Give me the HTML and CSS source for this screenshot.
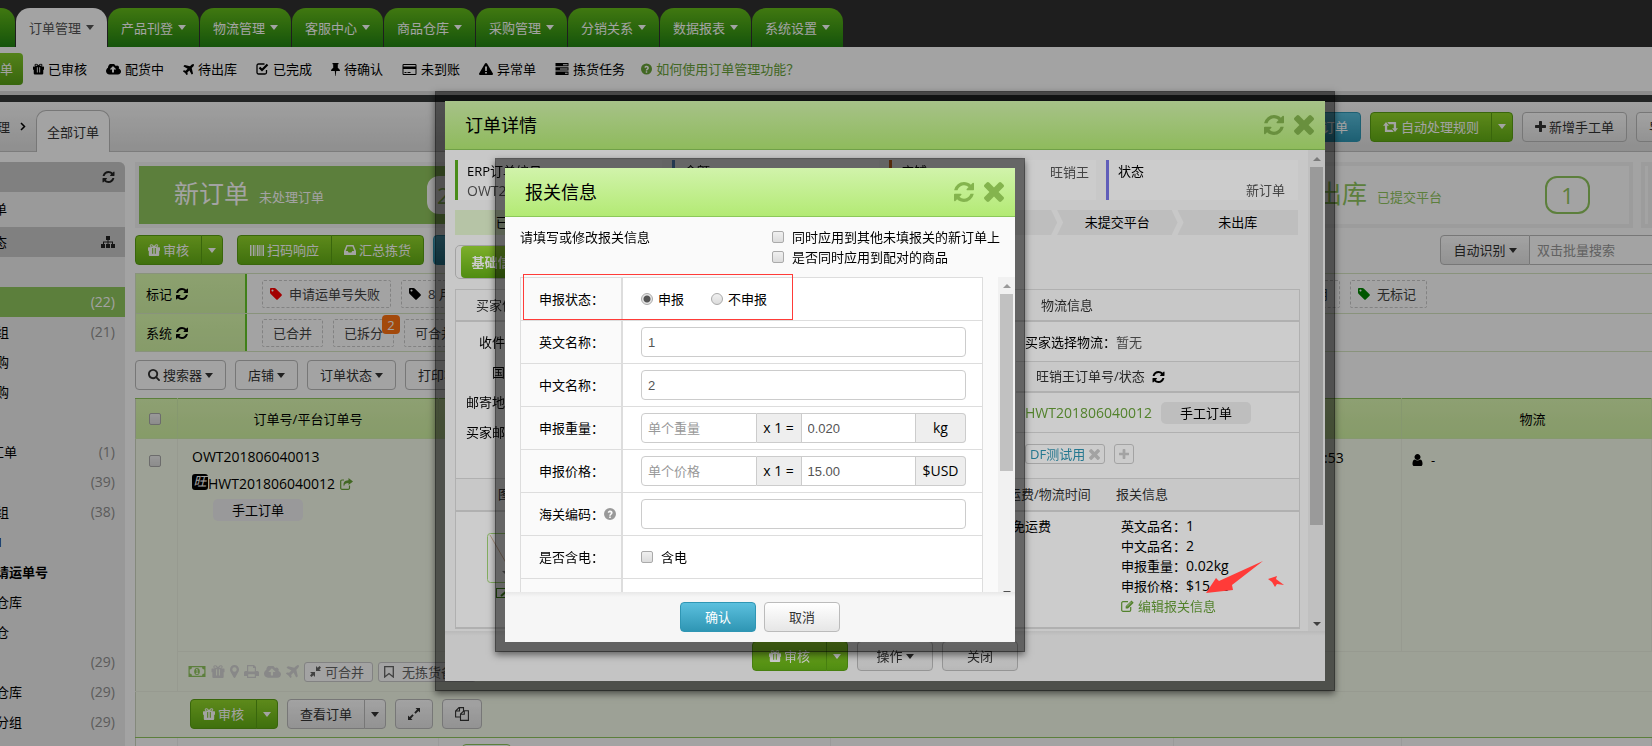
FILE: index.html
```html
<!DOCTYPE html>
<html lang="zh-CN">
<head>
<meta charset="utf-8">
<title>订单管理</title>
<link rel="stylesheet" href="styles.css">
</head>
<body>
<svg class="defs" aria-hidden="true">
  <symbol id="refresh" viewBox="128 128 1536 1536"><path d="M1639 1056q0 5-1 7-64 268-268 434.500t-478 166.500q-146 0-282.500-55t-243.500-157l-129 129q-19 19-45 19t-45-19-19-45v-448q0-26 19-45t45-19h448q26 0 45 19t19 45-19 45l-137 137q71 66 161 102t187 36q134 0 250-65t186-179q11-17 53-117 8-23 30-23h192q13 0 22.500 9.500t9.500 22.500zm25-800v448q0 26-19 45t-45 19h-448q-26 0-45-19t-19-45 19-45l138-138q-148-137-349-137-134 0-250 65t-186 179q-11 17-53 117-8 23-30 23h-199q-13 0-22.500-9.500t-9.500-22.500v-7q65-268 270-434.500t480-166.500q146 0 284 55.500t245 156.500l130-129q19-19 45-19t45 19 19 45z"/></symbol>
  <symbol id="times" viewBox="302 366 1188 1188"><path d="M1490 1322q0 40-28 68l-136 136q-28 28-68 28t-68-28l-294-294-294 294q-28 28-68 28t-68-28l-136-136q-28-28-28-68t28-68l294-294-294-294q-28-28-28-68t28-68l136-136q28-28 68-28t68 28l294 294 294-294q28-28 68-28t68 28l136 136q28 28 28 68t-28 68l-294 294 294 294q28 28 28 68z"/></symbol>
  <symbol id="plus" viewBox="192 128 1408 1408"><path d="M1600 736v192q0 40-28 68t-68 28h-416v416q0 40-28 68t-68 28h-192q-40 0-68-28t-28-68v-416h-416q-40 0-68-28t-28-68v-192q0-40 28-68t68-28h416v-416q0-40 28-68t68-28h192q40 0 68 28t28 68v416h416q40 0 68 28t28 68z"/></symbol>
  <symbol id="search" viewBox="64 128 1664 1664"><path d="M1216 832q0-185-131.500-316.500t-316.500-131.500-316.500 131.500-131.500 316.500 131.500 316.500 316.500 131.500 316.500-131.500 131.500-316.500zm512 832q0 52-38 90t-90 38q-54 0-90-38l-343-342q-179 124-399 124-143 0-273.500-55.500t-225-150-150-225-55.500-273.500 55.500-273.500 150-225 225-150 273.500-55.500 273.500 55.500 225 150 150 225 55.500 273.500q0 220-124 399l343 343q37 37 37 90z"/></symbol>
  <symbol id="tag" viewBox="128 128 1536 1536"><path d="M576 448q0-53-37.500-90.500t-90.500-37.500-90.500 37.500-37.500 90.500 37.500 90.500 90.500 37.500 90.500-37.500 37.500-90.500zm1067 576q0 53-37 90l-491 492q-39 37-91 37-53 0-90-37l-715-716q-38-37-64.500-101t-26.500-117v-416q0-52 38-90t90-38h416q53 0 117 26.500t102 64.500l715 714q37 39 37 91z"/></symbol>
  <symbol id="plane" viewBox="190 128 1410 1410"><path d="M1568 160q44 52 12 148t-108 172l-161 161 160 696q5 19-12 33l-128 96q-7 6-19 6-4 0-7-1-15-3-21-16l-279-508-259 259 53 194q5 17-8 31l-96 96q-9 9-23 9h-2q-15-2-24-13l-189-252-252-189q-11-7-13-23-1-13 9-25l96-97q9-9 23-9 6 0 8 1l194 53 259-259-508-279q-14-8-17-24-2-16 9-27l128-128q14-13 30-8l665 159 160-160q76-76 172-108t148 12z"/></symbol>
  <symbol id="cloud" viewBox="0 256 1920 1280"><path d="M1280 864q0-14-9-23l-352-352q-9-9-23-9t-23 9l-351 351q-10 12-10 24 0 14 9 23t23 9h224v352q0 13 9.500 22.500t22.500 9.500h192q13 0 22.500-9.500t9.500-22.500v-352h224q13 0 22.500-9.500t9.500-22.500zm640 288q0 159-112.500 271.500t-271.500 112.500h-1088q-185 0-316.500-131.500t-131.500-316.500q0-130 70-240t188-165q-2-30-2-43 0-212 150-362t362-150q156 0 285.500 87t188.500 231q71-62 166-62 106 0 181 75t75 181q0 76-41 138 130 31 213.500 135.500t83.500 238.500z"/></symbol>
  <symbol id="user" viewBox="256 128 1280 1536"><path d="M1536 1399q0 109-62.500 187t-150.500 78h-854q-88 0-150.500-78t-62.500-187q0-85 8.500-160.500t31.500-152 58.500-131 94-89 134.500-34.500q131 128 313 128t313-128q76 0 134.500 34.500t94 89 58.500 131 31.500 152 8.500 160.500zm-256-887q0 159-112.500 271.500t-271.500 112.500-271.500-112.500-112.500-271.500 112.500-271.500 271.500-112.500 271.500 112.500 112.500 271.500z"/></symbol>
  <symbol id="gift" viewBox="0 0 12 12"><path fill-rule="evenodd" d="M.5 3.200H3.200C1.500 3.200 1 .4 3.200.2 4.600.1 5.300 1 6 2 6.700 1 7.400.1 8.800.2 11 .4 10.500 3.200 8.800 3.200h2.700a.5.500 0 0 1 .5.500v3h-.8v4.300a.9.900 0 0 1-.9.900H1.700a.9.900 0 0 1-.9-.9V6.700H0v-3a.5.500 0 0 1 .5-.5zM3.300 1.200c-1 .1-.9 1.300 0 1.300h1.600c-.5-.8-1-1.300-1.600-1.300zm5.400 0c-.6 0-1.100.5-1.600 1.300h1.600c.9 0 1-1.200 0-1.300zM4.200 4v5.800h1V4zm2.600 0v5.800h1V4z"/></symbol>
  <symbol id="check" viewBox="0 0 13 12"><path d="M10.500 7v2.500a1.500 1.500 0 0 1-1.500 1.500H2.500A1.500 1.500 0 0 1 1 9.500v-7A1.500 1.500 0 0 1 2.500 1h6" fill="none" stroke="currentColor" stroke-width="1.300"/><path d="M3.500 4.500 6 7l5.500-5.500" fill="none" stroke="currentColor" stroke-width="2.200"/></symbol>
  <symbol id="pin" viewBox="0 0 9 13"><path d="M1.500 0h6v1.200H6.800V5C8 5.600 9 6.500 9 8H5.200L4.700 13h-.4L3.800 8H0c0-1.500 1-2.400 2.200-3V1.200h-.7z"/></symbol>
  <symbol id="card" viewBox="0 0 14 11"><path fill-rule="evenodd" d="M1.200 0h11.600A1.200 1.200 0 0 1 14 1.200v8.600a1.200 1.200 0 0 1-1.200 1.200H1.200A1.200 1.200 0 0 1 0 9.800V1.200A1.200 1.200 0 0 1 1.200 0zM1 1v1.500h12V1zm0 4v5h12V5zm1 3h2v1H2zm3 0h3v1H5z"/></symbol>
  <symbol id="warn" viewBox="0 0 14 12"><path fill-rule="evenodd" d="M7 0c.4 0 .8.200 1 .6l5.900 9.800c.4.800 0 1.600-1 1.600H1.100c-1 0-1.400-.8-1-1.600L6 .6C6.200.2 6.600 0 7 0zM6 3.500 6.200 8h1.600L8 3.500zM6.100 9v1.500h1.800V9z"/></symbol>
  <symbol id="tasks" viewBox="0 0 14 12"><path fill-rule="evenodd" d="M.5 0h13v3.300H.5zM.5 4.300h13v3.300H.5zM.5 8.600h13v3.300H.5zM8 1.200v1h4.600v-1zM5 5.500v1h7.600v-1zM10 9.700v1h2.600v-1z"/></symbol>
  <symbol id="help" viewBox="0 0 12 12"><path fill-rule="evenodd" d="M6 0a6 6 0 1 1 0 12A6 6 0 0 1 6 0zM3.600 4.200l1.300.7c.4-1 2-.9 2 .1 0 .9-1.700.9-1.700 2.700h1.600c0-1.200 1.800-1.200 1.800-2.900 0-2.500-3.700-3.200-5-.6zM5.200 8.400V10h1.600V8.400z"/></symbol>
  <symbol id="sitemap" viewBox="0 0 14 12"><path d="M5 0h4v4H7.500v1.500H12V8h2v4h-4V8h1V6.500H7.500V8H9v4H5V8h1.500V6.500H3V8h1v4H0V8h2V5.500h4.500V4H5z"/></symbol>
  <symbol id="barcode" viewBox="0 0 14 11"><path d="M0 0h1v11H0zM1.500 0h.7v11h-.7zM3 0h1.500v11H3zM5.500 0h.7v11h-.7zM7 0h1.500v11H7zM9.200 0h.7v11h-.7zM10.500 0h1v11h-1zM12.500 0H14v11h-1.500z"/></symbol>
  <symbol id="inbox" viewBox="0 0 12 10"><path fill-rule="evenodd" d="M2.500 0h7l2.500 6v3.500a.5.500 0 0 1-.5.500H.5a.5.500 0 0 1-.5-.5V6zm1 1.500L1.800 6h2l.8 1.600h2.800L8.200 6h2L8.500 1.500z"/></symbol>
  <symbol id="retweet" viewBox="0 0 15 10"><path d="M3 0l3 3.700H4.200V7.700H9L10.800 10H2.500a.6.600 0 0 1-.6-.6V3.700H0zM12 10 9 6.300h1.800V2.300H6L4.200 0h8.300a.6.600 0 0 1 .6.600v5.700H15z"/></symbol>
  <symbol id="share" viewBox="0 0 13 12"><path d="M9.500 7.500V10a1.300 1.300 0 0 1-1.300 1.300H2A1.300 1.300 0 0 1 .7 10V3.300A1.300 1.300 0 0 1 2 2h2" fill="none" stroke="currentColor" stroke-width="1.200"/><path d="M8.500 0 13 3.500 8.500 7V5C6 5 4.500 5.500 4 8.500 2.600 5 4.500 2.200 8.500 2.200z"/></symbol>
  <symbol id="edit" viewBox="0 0 13 12"><path d="M9.700 7v3a1.300 1.300 0 0 1-1.300 1.300H2A1.300 1.300 0 0 1 .7 10V3A1.300 1.300 0 0 1 2 1.700h5" fill="none" stroke="currentColor" stroke-width="1.200"/><path d="M10.500.5 12.700 2.700 7 8.500H4.700V6.200z"/><path d="M6 6.500 10.300 2.200" stroke="#fff" stroke-width=".6"/></symbol>
  <symbol id="money" viewBox="0 0 17 11"><path fill-rule="evenodd" d="M0 0h17v11H0zM3.500 1.200a2.300 2.300 0 0 1-2.300 2.300v4a2.300 2.300 0 0 1 2.300 2.300h10a2.300 2.300 0 0 1 2.300-2.300v-4a2.300 2.300 0 0 1-2.300-2.300z"/><ellipse cx="8.500" cy="5.500" rx="2.800" ry="3.500"/><path d="M7.500 4 8.600 3.200V7.500M7.300 7.500h2.500" stroke="#f7fdeb" fill="none" stroke-width=".9"/></symbol>
  <symbol id="marker" viewBox="0 0 9 13"><path fill-rule="evenodd" d="M4.500 0A4.500 4.500 0 0 1 9 4.500C9 6 8.500 6.700 5.300 12.500a.9.900 0 0 1-1.600 0C.5 6.700 0 6 0 4.500A4.500 4.500 0 0 1 4.500 0zm0 2.300a2.200 2.200 0 1 0 0 4.400 2.200 2.200 0 0 0 0-4.400z"/></symbol>
  <symbol id="print" viewBox="0 0 15 13"><path fill-rule="evenodd" d="M3 0h7l2 2v4h1.500A1.500 1.500 0 0 1 15 7.500V11h-3v2H3v-2H0V7.500A1.500 1.500 0 0 1 1.500 6H3zm1.200 1.200V6.500h6.600V3H9V1.200zm0 8v2.600h6.600V9.200z"/></symbol>
  <symbol id="compress" viewBox="0 0 11 11"><path d="M6 0v5h5L9.300 3.500 11 1.500 9.500 0 7.700 1.700zM5 11V6H0l1.700 1.500L0 9.500 1.500 11l1.800-1.700z"/></symbol>
  <symbol id="expand" viewBox="0 0 12 12"><path d="M7.500 0H12v4.500L10.400 3 7.600 5.700l-1.300-1.300L9 1.600zM4.500 12H0V7.500L1.600 9l2.800-2.700 1.300 1.300L3 10.400z"/></symbol>
  <symbol id="bookmark" viewBox="0 0 10 12"><path d="M.7.700h8.600v10.300L5 7.500.7 11z" fill="none" stroke="currentColor" stroke-width="1.300"/></symbol>
  <symbol id="copy" viewBox="0 0 14 14"><path d="M5.500 10H.6V4L4 .6h4.500V4M4.500.6V4H.8M5.500 13.400V7L9 3.700h4.400v9.700zM9.300 4v3.300H5.800" fill="none" stroke="currentColor" stroke-width="1.100"/></symbol>
</svg>

<div class="page">
  <header class="topbar">
    <nav class="tabs">
      <a class="tab tab-cut" href="#"></a>
      <a class="tab active" href="#">订单管理<i class="caret"></i></a>
      <a class="tab" href="#">产品刊登<i class="caret"></i></a>
      <a class="tab" href="#">物流管理<i class="caret"></i></a>
      <a class="tab" href="#">客服中心<i class="caret"></i></a>
      <a class="tab" href="#">商品仓库<i class="caret"></i></a>
      <a class="tab" href="#">采购管理<i class="caret"></i></a>
      <a class="tab" href="#">分销关系<i class="caret"></i></a>
      <a class="tab" href="#">数据报表<i class="caret"></i></a>
      <a class="tab" href="#">系统设置<i class="caret"></i></a>
    </nav>
  </header>
  <nav class="subnav">
    <a class="current" href="#">单</a>
    <a href="#"><svg width="11" height="12"><use href="#gift"/></svg>已审核</a>
    <a href="#"><svg width="15" height="11"><use href="#cloud"/></svg>配货中</a>
    <a href="#"><svg width="11" height="11"><use href="#plane"/></svg>待出库</a>
    <a href="#"><svg width="13" height="12"><use href="#check"/></svg>已完成</a>
    <a href="#"><svg width="9" height="13"><use href="#pin"/></svg>待确认</a>
    <a href="#"><svg width="15" height="11"><use href="#card"/></svg>未到账</a>
    <a href="#"><svg width="14" height="12"><use href="#warn"/></svg>异常单</a>
    <a href="#"><svg width="14" height="12"><use href="#tasks"/></svg>拣货任务</a>
    <a class="howto" href="#"><svg width="11" height="12"><use href="#help"/></svg>如何使用订单管理功能？</a>
  </nav>
  <div class="crumbs">
    <span class="crumb">理</span>
    <svg class="chev" width="6" height="9" viewBox="0 0 6 9"><path d="M1 1l3.500 3.500L1 8" fill="none" stroke="currentColor" stroke-width="1.500"/></svg>
    <a class="page-tab" href="#">全部订单</a>
    <div class="crumb-actions">
      <button class="btn teal">同步订单</button>
      <div class="split">
        <button class="btn green"><svg width="15" height="10"><use href="#retweet"/></svg>自动处理规则</button><button class="btn green more" aria-label="更多"><i class="caret"></i></button>
      </div>
      <button class="btn"><svg width="11" height="11"><use href="#plus"/></svg>新增手工单</button>
      <button class="btn">导出</button>
    </div>
  </div>

  <div class="columns">
    <aside class="side">
      <div class="side-head"><svg width="13" height="12"><use href="#refresh"/></svg></div>
      <a class="side-top" href="#"><span>单</span></a>
      <div class="side-head"><span>态</span><svg width="14" height="12"><use href="#sitemap"/></svg></div>
      <ul>
        <li></li>
        <li class="on"><span></span><b>(22)</b></li>
        <li><span>组</span><b>(21)</b></li>
        <li><span>购</span></li>
        <li><span>购</span></li>
        <li></li>
        <li><span class="far">汇单</span><b>(1)</b></li>
        <li><span></span><b>(39)</b></li>
        <li><span>组</span><b>(38)</b></li>
        <li><span>1</span></li>
        <li><span class="strong">请运单号</span></li>
        <li><span>仓库</span></li>
        <li><span>仓</span></li>
        <li><span></span><b>(29)</b></li>
        <li><span>仓库</span><b>(29)</b></li>
        <li><span>分组</span><b>(29)</b></li>
      </ul>
    </aside>

    <main class="main">
      <section class="cards">
        <div class="card solid"><h2>新订单</h2><span>未处理订单</span><strong>22</strong></div>
        <div class="card"></div>
        <div class="card"></div>
        <div class="card"><h2>待出库</h2><span>已提交平台</span><strong>1</strong></div>
        <div class="card"></div>
      </section>

      <section class="tools">
        <div class="split">
          <button class="btn green"><svg width="12" height="12"><use href="#gift"/></svg>审核</button><button class="btn green more" aria-label="更多"><i class="caret"></i></button>
        </div>
        <div class="split">
          <button class="btn green"><svg width="14" height="11"><use href="#barcode"/></svg>扫码响应</button><button class="btn green"><svg width="12" height="10"><use href="#inbox"/></svg>汇总拣货</button>
        </div>
        <button class="btn teal">标记</button>
        <div class="split finder">
          <button class="btn">自动识别<i class="caret"></i></button><input type="text" placeholder="双击批量搜索" aria-label="搜索">
        </div>
      </section>

      <section class="filters">
        <div class="filter">
          <div class="filter-name">标记<svg width="12" height="12"><use href="#refresh"/></svg></div>
          <div class="chips">
            <span class="chip"><svg class="red" width="12" height="12"><use href="#tag"/></svg>申请运单号失败</span>
            <span class="chip"><svg class="black" width="12" height="12"><use href="#tag"/></svg>8 月</span>
            <span class="chip push"><svg class="black" width="12" height="12"><use href="#tag"/></svg>6 月</span>
            <span class="chip"><svg class="dark-green" width="12" height="12"><use href="#tag"/></svg>无标记</span>
          </div>
        </div>
        <div class="filter">
          <div class="filter-name">系统<svg width="12" height="12"><use href="#refresh"/></svg></div>
          <div class="chips">
            <span class="chip">已合并</span>
            <span class="chip">已拆分<em>2</em></span>
            <span class="chip">可合并</span>
          </div>
        </div>
      </section>

      <section class="pickers">
        <button class="btn flat"><svg width="12" height="12"><use href="#search"/></svg>搜索器<i class="caret"></i></button>
        <button class="btn flat">店铺<i class="caret"></i></button>
        <button class="btn flat">订单状态<i class="caret"></i></button>
        <button class="btn flat">打印状态<i class="caret"></i></button>
      </section>

      <table class="orders">
        <colgroup><col class="c-check"><col class="c-no"><col class="c-goods"><col class="c-buyer"><col class="c-time"><col></colgroup>
        <thead>
          <tr><th><input type="checkbox" aria-label="全选"></th><th class="no-head">订单号/平台订单号</th><th></th><th></th><th></th><th class="ship-head">物流</th></tr>
        </thead>
        <tbody>
          <tr class="row">
            <td rowspan="2" class="tick"><input type="checkbox" aria-label="选择订单"></td>
            <td class="order-no" colspan="2">
              <div class="num">OWT201806040013</div>
              <div class="num line"><i class="brand">旺</i>HWT201806040012<svg class="leaf" width="13" height="12"><use href="#share"/></svg></div>
              <span class="pill">手工订单</span>
            </td>
            <td></td>
            <td class="time num">:53</td>
            <td class="ship"><svg width="11" height="12"><use href="#user"/></svg>-</td>
          </tr>
          <tr class="state"><td colspan="5"><div class="marks">
            <svg class="leaf" width="18" height="11"><use href="#money"/></svg>
            <svg width="14" height="13"><use href="#gift"/></svg>
            <svg width="9" height="13"><use href="#marker"/></svg>
            <svg width="15" height="13"><use href="#print"/></svg>
            <svg width="17" height="12"><use href="#cloud"/></svg>
            <svg width="13" height="13"><use href="#plane"/></svg>
            <span class="mark"><svg width="11" height="11"><use href="#compress"/></svg>可合并</span>
            <span class="mark wide"><svg width="10" height="12"><use href="#bookmark"/></svg>无拣货备注</span>
          </div></td></tr>
          <tr class="acts"><td colspan="6"><div class="act-list">
            <div class="split">
              <button class="btn green"><svg width="12" height="12"><use href="#gift"/></svg>审核</button><button class="btn green more" aria-label="更多"><i class="caret"></i></button>
            </div>
            <div class="split">
              <button class="btn">查看订单</button><button class="btn more" aria-label="更多"><i class="caret"></i></button>
            </div>
            <button class="btn" aria-label="展开"><svg width="12" height="12"><use href="#expand"/></svg></button>
            <button class="btn" aria-label="复制"><svg width="14" height="14"><use href="#copy"/></svg></button>
          </div></td></tr>
          <tr class="next"><td></td><td></td><td><span class="stub"></span></td><td></td><td></td><td></td></tr>
        </tbody>
      </table>
    </main>
  </div>
</div>

<div class="backdrop"></div>
<section class="modal detail" role="dialog" aria-label="订单详情">
  <header class="modal-head">
    <h1>订单详情</h1>
    <button aria-label="刷新"><svg width="20" height="20"><use href="#refresh"/></svg></button>
    <button aria-label="关闭"><svg width="20" height="20"><use href="#times"/></svg></button>
  </header>
  <div class="modal-body">
    <div class="detail-main">
      <div class="stats">
        <div class="stat s-green"><b>ERP订单编号</b><p class="num">OWT201806040013</p></div>
        <div class="stat s-blue"><b>金额</b></div>
        <div class="stat s-orange"><b>店铺</b><p class="inline">旺销王</p></div>
        <div class="stat s-purple"><b>状态</b><p class="end">新订单</p></div>
      </div>
      <ol class="steps"><li class="done">已付款</li><li></li><li></li><li></li><li></li><li>未提交平台</li><li>未出库</li></ol>
      <div class="subtabs"><a href="#">基础信息</a></div>
      <div class="info">
        <div class="info-left">
          <h3>买家信息</h3>
          <dl><dt>收件人：</dt><dt>国家：</dt><dt>邮寄地址：</dt><dt>买家邮箱：</dt></dl>
        </div>
        <div class="info-right">
          <h3>物流信息</h3>
          <p class="cell">买家选择物流：<span>暂无</span></p>
          <h3 class="second">旺销王订单号/状态<svg width="13" height="12"><use href="#refresh"/></svg></h3>
          <p class="cell"><a class="num leaf" href="#">HWT201806040012</a><span class="pill">手工订单</span></p>
          <p class="cell tags"><span class="tagbox">DF测试用<svg width="11" height="11"><use href="#times"/></svg></span><span class="tagbox add"><svg width="10" height="10"><use href="#plus"/></svg></span></p>
        </div>
      </div>
      <div class="goods">
        <div class="g-head g-pic">图片</div><div class="g-head g-fee">运费/物流时间</div><div class="g-head g-customs">报关信息</div>
        <div class="g-cell g-thumb"><svg width="60" height="66" viewBox="0 0 60 66"><rect x=".5" y=".5" width="59" height="49" rx="3" fill="none" stroke="#a6da78"/><path d="M3 2 26 42" stroke="#d9b9a0" fill="none"/><path d="M15 38h8l-4 4z" fill="#888"/><rect x="9.500" y="55.500" width="18" height="9" fill="none" stroke="#3f8a14"/><path d="M14 63l7-6" stroke="#3f8a14" stroke-width="2"/></svg></div>
        <div class="g-cell g-free">免运费</div>
        <div class="g-cell g-list">
          <p>英文品名：<span class="num">1</span></p><p>中文品名：<span class="num">2</span></p><p>申报重量：<span class="num">0.02kg</span></p><p>申报价格：<span class="num">$15.00</span></p>
          <p><a class="leaf" href="#"><svg width="13" height="12"><use href="#edit"/></svg>编辑报关信息</a></p>
        </div>
      </div>
    </div>
    <div class="scroll"><i class="up"></i><i class="thumb"></i><i class="down"></i></div>
  </div>
  <footer class="modal-foot">
    <div class="split wide-split">
      <button class="btn green"><svg width="12" height="12"><use href="#gift"/></svg>审核</button><button class="btn green more" aria-label="更多"><i class="caret"></i></button>
    </div>
    <button class="btn mid">操作<i class="caret"></i></button>
    <button class="btn mid">关闭</button>
  </footer>
</section>

<div class="backdrop"></div>
<section class="modal customs" role="dialog" aria-label="报关信息">
  <header class="modal-head">
    <h1>报关信息</h1>
    <button aria-label="刷新"><svg width="20" height="20"><use href="#refresh"/></svg></button>
    <button aria-label="关闭"><svg width="20" height="20"><use href="#times"/></svg></button>
  </header>
  <div class="customs-body">
    <div class="intro">
      <p>请填写或修改报关信息</p>
      <div>
        <label><input type="checkbox">同时应用到其他未填报关的新订单上</label>
        <label><input type="checkbox">是否同时应用到配对的商品</label>
      </div>
    </div>
    <div class="form-area">
      <div class="form">
        <div class="field"><span class="name">申报状态：</span><div class="value">
          <label class="opt"><input type="radio" name="declare" checked>申报</label>
          <label class="opt"><input type="radio" name="declare">不申报</label>
        </div></div>
        <div class="field"><label class="name" for="en">英文名称：</label><div class="value"><input id="en" type="text" value="1"></div></div>
        <div class="field"><label class="name" for="cn">中文名称：</label><div class="value"><input id="cn" type="text" value="2"></div></div>
        <div class="field"><label class="name" for="weight">申报重量：</label><div class="value joined"><input id="weight" type="text" placeholder="单个重量"><span class="addon num">x 1 =</span><input type="text" value="0.020" aria-label="总重量"><span class="addon unit num">kg</span></div></div>
        <div class="field"><label class="name" for="price">申报价格：</label><div class="value joined"><input id="price" type="text" placeholder="单个价格"><span class="addon num">x 1 =</span><input type="text" value="15.00" aria-label="总价格"><span class="addon unit num">$USD</span></div></div>
        <div class="field"><label class="name" for="hs">海关编码：<svg width="12" height="12"><use href="#help"/></svg></label><div class="value"><input id="hs" type="text"></div></div>
        <div class="field"><span class="name">是否含电：</span><div class="value"><label class="opt battery"><input type="checkbox">含电</label></div></div>
        <div class="field"><span class="name"></span><div class="value"></div></div>
      </div>
      <div class="scroll"><i class="up"></i><i class="thumb"></i><i class="down"></i></div>
    </div>
  </div>
  <footer class="modal-foot">
    <button class="btn teal mid">确认</button>
    <button class="btn mid">取消</button>
  </footer>
</section>

<div class="frame-note"></div>
<svg class="arrow-note" width="80" height="36" viewBox="0 0 80 36"><path d="M1 33 11 18l3 3L58 1 27 25l1 5zM63 19l9-3-1 3 8 6-7-1-2 3-3-5z" fill="#ff3b38"/></svg>
</body>
</html>
```

FILE: styles.css
```css
* { box-sizing: border-box; }
body {
  margin: 0;
  min-height: 100vh;
  overflow: hidden;
  background: #fff;
  color: #000;
  font: 13px/20px "Open Sans", "Noto Sans CJK SC", sans-serif;
}
h1, h2, h3, p, ul, ol, dl { margin: 0; padding: 0; list-style: none; font-weight: 400; }
a { color: inherit; text-decoration: none; }
svg { fill: currentColor; flex: none; }
button { font: inherit; color: inherit; cursor: pointer; }
.defs { display: none; }
.num { font-size: 14px; }
.leaf { color: #68a338; }
.caret {
  flex: none;
  width: 0;
  height: 0;
  border: 4px solid transparent;
  border-top: 5px solid currentColor;
  border-bottom: 0;
}
.page { height: 100vh; overflow: hidden; display: flex; flex-direction: column; }

/* top navigation */
.topbar { background: #303030; padding-top: 8px; }
.tabs { display: flex; gap: 1px; }
.tab {
  width: 91px;
  height: 39px;
  display: flex;
  align-items: center;
  justify-content: center;
  gap: 5px;
  border-radius: 14px 14px 0 0;
  background: linear-gradient(#66bd1a, #228412);
  color: #fff;
}
.tab-cut { width: 15px; border-top-left-radius: 0; }
.tab.active { background: #fff; color: #555; }
.subnav { display: flex; align-items: center; gap: 19px; height: 44px; white-space: nowrap; }
.subnav a { display: flex; align-items: center; gap: 4px; }
.subnav .current {
  width: 23px;
  height: 32px;
  margin-right: -9px;
  border-radius: 0 4px 4px 0;
  background: linear-gradient(#84cc2a, #58a016);
  color: #fff;
}
.subnav .howto { color: #68a338; margin-left: -3px; }
.crumbs {
  display: flex;
  align-items: center;
  height: 61px;
  border-top: 4px solid #dcdcdc;
  border-bottom: 1px solid #c2c2c2;
  background: linear-gradient(#363a3a 0 7px, #fbfbfb 7px, #e0e0e0);
  padding-top: 7px;
}
.crumb { width: 10px; direction: rtl; color: #333; }
.chev { margin: 0 10px; }
.page-tab {
  align-self: flex-end;
  width: 74px;
  height: 42px;
  line-height: 43px;
  margin: 0 0 -1px;
  text-align: center;
  border: 1px solid #bbb;
  border-bottom: 0;
  border-radius: 10px 10px 0 0;
  background: #fff;
  color: #333;
}
.crumb-actions { display: flex; gap: 9px; margin: 0 -36px 0 auto; }

/* buttons */
.btn {
  height: 30px;
  display: inline-flex;
  align-items: center;
  justify-content: center;
  gap: 3px;
  padding: 0 12px;
  border: 1px solid #bbb;
  border-radius: 4px;
  background: linear-gradient(#fff, #e6e6e6);
  color: #333;
  white-space: nowrap;
}
.btn.green { background: linear-gradient(#93d82b, #64b016); border-color: #5aa014; color: #fff; }
.btn.teal { background: linear-gradient(#5bc0de, #2f96b4); border-color: #2f96b4; color: #fff; }
.btn.flat { background: #fff; }
.btn.mid { width: 76px; }
.split { display: flex; }
.split > .btn:not(:last-child) { border-top-right-radius: 0; border-bottom-right-radius: 0; }
.split > .btn + .btn { border-top-left-radius: 0; border-bottom-left-radius: 0; margin-left: -1px; }
.btn.more { width: 22px; padding: 0; }

/* sidebar */
.columns { display: flex; flex: 1; min-height: 0; padding-top: 10px; gap: 10px; }
.side { width: 125px; background: #eee; border-radius: 0 6px 0 0; overflow: hidden; }
.side-head { height: 30px; display: flex; align-items: center; padding-right: 10px; background: #c9c9c9; }
.side-head svg { margin-left: auto; color: #222; }
.side-top { display: block; height: 35px; line-height: 35px; background: #f2f2f2; }
.side-top span, .side-head span { margin-left: -6px; }
.side li { height: 30px; line-height: 30px; display: flex; justify-content: space-between; padding-right: 10px; }
.side li span { margin-left: -4px; }
.side li .far { margin-left: -9px; }
.side li b { font-weight: 400; font-size: 14px; color: #909090; }
.side .strong { font-weight: 700; }
.side li.on { background: #91c75e; }
.side li.on b { color: #fff; }

/* summary cards */
.main { flex: 1; min-width: 0; }
.cards { display: grid; grid-template-columns: 380px 1fr 1fr 380px 11px; gap: 8px; height: 66px; }
.card {
  display: flex;
  align-items: center;
  justify-content: center;
  gap: 10px;
  padding-right: 4px;
  border: 4px solid #f5f5f5;
  color: #91c75e;
  white-space: nowrap;
}
.card:last-child { padding: 0; }
.card h2 { font-size: 25px; line-height: 32px; margin-bottom: 4px; }
.card span { margin-top: 4px; }
.card strong {
  width: 45px;
  height: 38px;
  margin-left: 93px;
  border: 2px solid #91c75e;
  border-radius: 12px;
  font-size: 22px;
  font-weight: 400;
  line-height: 34px;
  text-align: center;
}
.card.solid { background: #91c75e; color: #fff; }
.card.solid strong { background: #fff; color: #91c75e; border-color: #fff; }

/* toolbar */
.tools { display: flex; gap: 14px; margin-top: 7px; }
.tools > .teal { margin-left: -5px; }
.finder { margin-left: auto; width: 212px; }
.finder .btn { width: 90px; padding: 0; }
.finder input { flex: 1; min-width: 0; height: 30px; border: 1px solid #bbb; border-width: 1px 0; padding: 0 7px; background: #fff; font: inherit; }
::placeholder { color: #999; opacity: 1; }

/* tag filters */
.filters { margin-top: 8px; border: 1px solid #d7e6c4; border-right: 0; }
.filter { display: flex; height: 39px; }
.filter + .filter { height: 38px; border-top: 1px solid #d7e6c4; }
.filter-name {
  width: 111px;
  padding-left: 10px;
  display: flex;
  align-items: center;
  gap: 4px;
  border-right: 2px solid #66c828;
  background: linear-gradient(#dcfbaf, #d3f5a6);
}
.chips { flex: 1; display: flex; align-items: center; gap: 10px; padding: 0 225px 0 15px; }
.chip {
  position: relative;
  height: 28px;
  display: flex;
  align-items: center;
  gap: 7px;
  padding: 0 10px 0 7px;
  border: 1px dashed #ccc;
  border-radius: 2px;
  color: #444;
  white-space: nowrap;
}
.filter + .filter .chip { padding: 0 10px; }
.chip em {
  position: absolute;
  top: -5px;
  right: -7px;
  width: 18px;
  height: 19px;
  border-radius: 4px;
  background: #ff7412;
  color: #fff;
  font-style: normal;
  text-align: center;
}
.push { margin-left: auto; }
.red { color: #f00; }
.black { color: #000; }
.dark-green { color: #080; }
.pickers { display: flex; gap: 9px; margin: 8px 0; }

/* order table */
.orders { width: 100%; table-layout: fixed; border-collapse: collapse; border-left: 1px solid #d0d8c4; border-top: 1px solid #91c75e; }
.orders th, .orders td { padding: 0; font-weight: 400; text-align: left; vertical-align: top; }
.c-check { width: 42px; }
.c-no { width: 261px; }
.c-goods { width: 392px; }
.c-buyer { width: 343px; }
.c-time { width: 228px; }
.orders thead tr { background: linear-gradient(#dffab4, #d2f4a4); }
.orders thead th { height: 40px; vertical-align: middle; text-align: center; border: 1px solid #d2eeae; border-width: 0 1px 1px 0; }
.orders .ship-head { padding-left: 12px; }
.orders th input[type="checkbox"], .orders .tick input[type="checkbox"] { margin: 0 0 0 13px; display: block; }
.row td { height: 213px; background: #f7fdeb; border-right: 1px solid #edf2e2; border-bottom: 1px solid #edf2e2; }
.orders .tick { padding-top: 16px; }
.orders .order-no { padding: 8px 0 0 14px; }
.line { display: flex; align-items: center; margin-top: 7px; }
.line .leaf { margin-left: 5px; }
.brand {
  width: 16px;
  height: 16px;
  margin-top: -4px;
  border-radius: 3px;
  background: #000;
  color: #fff;
  font-size: 13px;
  line-height: 15px;
  text-align: center;
}
.pill {
  display: inline-block;
  width: 90px;
  height: 22px;
  line-height: 22px;
  border-radius: 5px;
  background: #f0f0f2;
  text-align: center;
}
.order-no .pill { margin: 5px 0 0 21px; }
.orders .time { padding-top: 9px; padding-left: 150px; }
.orders .ship { padding: 11px 0 0 10px; }
.ship svg { margin-right: 8px; vertical-align: -1px; }
.state td, .acts td { background: #f7fdeb; }
.state td { border-bottom: 1px solid #edf2e2; }
.marks { height: 39px; display: flex; align-items: center; gap: 5px; padding-left: 10px; color: #d5d5d5; }
.marks > .leaf { color: #91c75e; }
.mark {
  height: 20px;
  display: flex;
  align-items: center;
  gap: 4px;
  padding: 0 8px 0 5px;
  border: 1px solid #ccc;
  border-radius: 3px;
  background: #fff;
  color: #666;
  white-space: nowrap;
}
.mark.wide { gap: 8px; }
.acts td { border-bottom: 1px solid #91c75e; }
.act-list { height: 45px; display: flex; align-items: center; gap: 9px; padding: 0 0 1px 54px; }
.next td { height: 40px; border-right: 1px solid #f2f2f2; }
.orders .next td { padding: 6px 0 0 23px; }
.stub { display: block; width: 49px; height: 20px; border: 1px solid #91c75e; border-radius: 4px; }

/* form controls */
input[type="checkbox"], input[type="radio"] {
  appearance: none;
  width: 12px;
  height: 12px;
  margin: 0;
  border: 1px solid #aaa;
  border-radius: 2px;
  background: linear-gradient(#f0f0f0, #dcdcdc);
}
input[type="radio"] { border-radius: 50%; }
input[type="radio"]:checked { background: radial-gradient(circle, #555 0 3px, #e6e6e6 4px); }

/* dialogs */
.backdrop { position: fixed; inset: 0; background: rgba(0, 0, 0, 0.2); }
.modal {
  position: absolute;
  isolation: isolate;
  display: flex;
  flex-direction: column;
  border: 10px solid rgba(0, 0, 0, 0.5);
  background: #fafafa;
  background-clip: padding-box;
  box-shadow: 0 3px 7px rgba(0, 0, 0, 0.5);
}
.detail { left: 435px; top: 91px; width: 900px; height: 600px; }
.customs { left: 495px; top: 158px; width: 530px; height: 494px; }
.modal-head {
  height: 49px;
  flex: none;
  display: flex;
  align-items: center;
  gap: 10px;
  padding: 0 11px 0 20px;
  border-bottom: 1px solid #8cc95a;
  background: linear-gradient(#d1f3ab, #b3ea74);
}
.modal-head h1 { flex: 1; font-size: 18px; line-height: 24px; }
.modal-head button { display: flex; padding: 0; border: 0; background: none; color: #84b44e; }
.modal-body { flex: 1; min-height: 0; display: flex; overflow: hidden; }
.modal-foot {
  height: 50px;
  flex: none;
  display: flex;
  align-items: center;
  justify-content: center;
  gap: 8px;
  background: linear-gradient(#e8e8e8, #f6f6f6 5px);
}
.detail .modal-foot { gap: 9px; }
.wide-split { width: 96px; }
.wide-split .btn:first-child { flex: 1; }

.detail-main { flex: 1; min-width: 0; padding: 10px 8px 0 10px; }
.stats { display: grid; grid-template-columns: repeat(3, 207px) 1fr; gap: 10px; margin-right: 2px; }
.stat { height: 40px; padding: 1px 9px; border-left: 3px solid #5cb020; background: #fff; color: #000; overflow: hidden; white-space: nowrap; }
.stat b { font-weight: 400; }
.stat p { color: #555; line-height: 19px; }
.s-blue { border-color: #5a90c8; }
.s-orange { border-color: #d2691e; padding-right: 7px; display: flex; justify-content: space-between; }
.s-purple { border-color: #7876e8; }
.stat .inline { padding: 2px 0 0; }
.stat .end { text-align: right; padding-right: 4px; }
.steps { display: grid; grid-template-columns: repeat(7, 1fr); margin: 10px 2px 0 0; }
.steps li { position: relative; height: 25px; line-height: 25px; background: #eee; text-align: center; }
.steps li.done { background: #e4f5d0; }
.steps li:not(:last-child)::after {
  content: "";
  position: absolute;
  z-index: 1;
  right: -6px;
  top: 0;
  width: 12px;
  height: 25px;
  background: #fafafa;
  clip-path: polygon(0 0, 50% 0, 100% 50%, 50% 100%, 0 100%, 50% 50%);
}
.subtabs { height: 34px; margin: 10px 2px 0 0; border-radius: 5px; padding-left: 5px; width: 300px; border: 1px solid #ccc; }
.subtabs a {
  display: block;
  width: 73px;
  height: 32px;
  line-height: 32px;
  text-align: center;
  border-radius: 4px;
  background: linear-gradient(#9ddb36, #64b016);
  color: #fff;
  font-weight: 700;
}
.info { display: flex; margin-top: 10px; border: 1px solid #ddd; border-bottom: 0; background: #fff; }
.info-left { flex: 1; }
.info h3 { height: 32px; line-height: 31px; padding-left: 20px; font-size: 13px; border-bottom: 2px solid #ddd; background: #fafafa; color: #333; }
.info dl { width: 75px; padding-top: 5px; }
.info dt { line-height: 30px; text-align: right; white-space: nowrap; }
.info-right { width: 283px; }
.info-right h3 { padding-left: 25px; }
.info-right .second { display: flex; align-items: center; gap: 7px; padding-left: 20px; border-top: 1px solid #ddd; }
.info-right .second svg { color: #000; }
.info-right .cell { height: 39px; display: flex; align-items: center; padding-left: 9px; }
.info-right .cell span { color: #555; }
.info-right .cell .pill { margin-left: 9px; background: #eee; color: #000; }
.info-right .tags { height: 46px; gap: 9px; padding-bottom: 3px; border-top: 1px solid #ddd; }
.info-right .cell .tagbox {
  height: 20px;
  display: flex;
  align-items: center;
  gap: 4px;
  padding: 0 4px;
  border: 1px solid #ccc;
  border-radius: 3px;
  color: #2f96b4;
}
.tagbox svg { color: #ccc; }
.goods { display: grid; grid-template-columns: 1fr 104px 195px; border: 1px solid #ddd; background: #fff; }
.g-head { height: 33px; line-height: 31px; border-bottom: 2px solid #ddd; background: #fafafa; color: #333; white-space: nowrap; }
.g-pic { padding-left: 42px; }
.g-fee { padding-left: 8px; }
.g-customs { padding-left: 12px; }
.g-cell { height: 116px; border-bottom: 1px solid #ddd; padding-top: 4px; }
.g-thumb { padding: 21px 0 0 31px; }
.g-free { padding-left: 12px; }
.g-list { padding-left: 17px; }
.g-list a svg { margin-right: 4px; vertical-align: -1px; }

.scroll { width: 17px; flex: none; display: flex; flex-direction: column; align-items: center; background: #f1f1f1; }
.scroll .up { margin: 7px 0 6px; border: 4px solid transparent; border-bottom-color: #999; border-top: 0; }
.scroll .thumb { width: 13px; height: 358px; background: #c1c1c1; }
.scroll .down { margin: auto 0 5px; border: 4px solid transparent; border-top-color: #505050; border-bottom: 0; }

.customs-body { flex: 1; min-height: 0; display: flex; flex-direction: column; padding-left: 15px; }
.intro { display: flex; justify-content: space-between; padding: 10px 14px 10px 0; }
.intro div { width: 229px; }
.intro label { display: flex; align-items: center; gap: 8px; white-space: nowrap; }
.form-area { flex: 1; min-height: 0; display: flex; overflow: hidden; }
.form { width: 463px; margin-right: auto; align-self: flex-start; border: 1px solid #ddd; background: #fff; }
.field { display: flex; height: 43px; border-bottom: 1px solid #ddd; }
.field .name { width: 102px; padding-left: 18px; display: flex; align-items: center; border-right: 2px solid #ddd; background: #fafafa; white-space: nowrap; }
.name svg { color: #999; }
.value { flex: 1; min-width: 0; display: flex; align-items: center; padding: 0 16px 0 18px; }
.value input[type="text"] {
  flex: 1;
  min-width: 0;
  height: 30px;
  padding: 0 6px;
  border: 1px solid #ccc;
  border-radius: 4px;
  background: #fff;
  color: #555;
  font: 13px "Liberation Sans", "Noto Sans CJK SC", sans-serif;
}
.joined input:first-child[type="text"] { border-radius: 4px 0 0 4px; }
.joined input:not(:first-child)[type="text"] { border-radius: 0; }
.addon { width: 44px; height: 30px; line-height: 28px; text-align: center; border: solid #ccc; border-width: 1px 0; background: #eee; }
.addon.unit { width: 50px; border-right-width: 1px; border-radius: 0 4px 4px 0; }
.opt { display: flex; align-items: center; gap: 5px; margin-right: 27px; }
.opt.battery { gap: 8px; }
.customs .thumb { height: 177px; }
.customs .down { margin-bottom: -3px; }

/* annotations */
.frame-note { position: absolute; left: 523px; top: 274px; width: 270px; height: 46px; border: 1px solid #ff3b38; }
.arrow-note { position: absolute; left: 1205px; top: 560px; }
```
